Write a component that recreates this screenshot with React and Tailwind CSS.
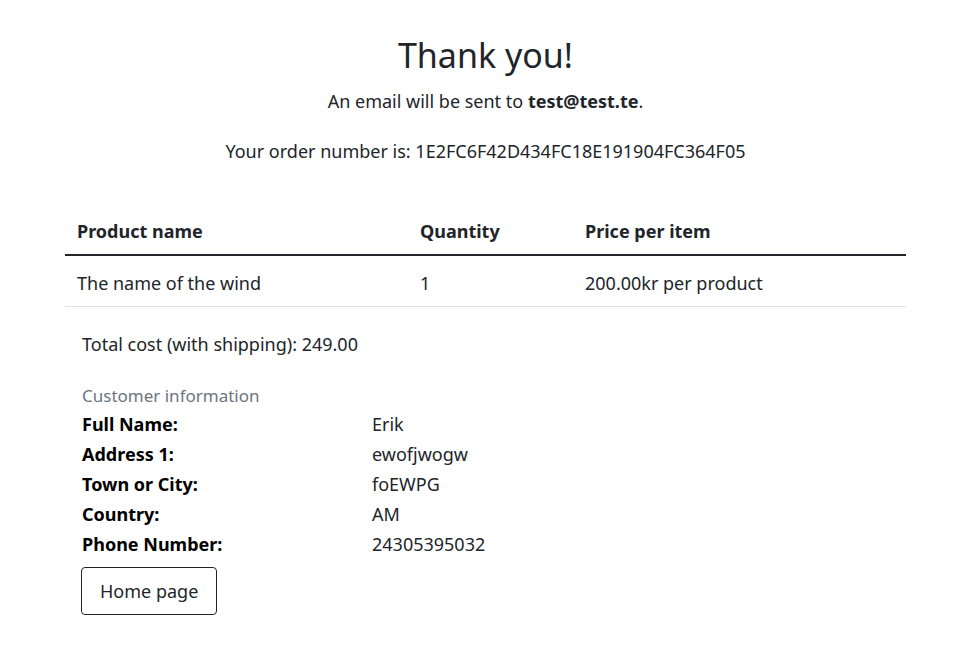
import React from "react";

const order = {
  email: "test@test.te",
  number: "1E2FC6F42D434FC18E191904FC364F05",
  items: [{ name: "The name of the wind", quantity: 1, price: "200.00" }],
  total: "249.00",
};

const customer = [
  ["Full Name:", "Erik"],
  ["Address 1:", "ewofjwogw"],
  ["Town or City:", "foEWPG"],
  ["Country:", "AM"],
  ["Phone Number:", "24305395032"],
];

export default function App() {
  return (
    <div
      className="min-h-[648px] bg-white text-[#212529] text-[18px]"
      style={{ fontFamily: '"Noto Sans", "Open Sans", sans-serif' }}
    >
      <div className="ml-[65px] w-[841px] pt-[31px]">
        <div className="text-center">
          <h1 className="text-[34px] leading-[48px]">Thank you!</h1>
          <p className="mt-[9px] leading-[27px]">
            An email will be sent to <strong className="font-bold">{order.email}</strong>.
          </p>
          <p className="mt-[23px] leading-[27px]">Your order number is: {order.number}</p>
        </div>

        <table className="mt-[43px] w-full text-left">
          <thead>
            <tr className="border-b-2 border-[#212529]">
              <th className="w-[343px] px-3 pt-[10px] pb-[9px] font-bold">Product name</th>
              <th className="w-[165px] px-3 pt-[10px] pb-[9px] font-bold">Quantity</th>
              <th className="px-3 pt-[10px] pb-[9px] font-bold">Price per item</th>
            </tr>
          </thead>
          <tbody>
            {order.items.map((item) => (
              <tr key={item.name} className="border-b border-[#dee2e6]">
                <td className="px-3 pt-[14px] pb-[9px]">{item.name}</td>
                <td className="px-3 pt-[14px] pb-[9px]">{item.quantity}</td>
                <td className="px-3 pt-[14px] pb-[9px]">{item.price}kr per product</td>
              </tr>
            ))}
          </tbody>
        </table>

        <div className="px-[17px]">
          <p className="mt-[24px] leading-[27px]">Total cost (with shipping): {order.total}</p>

          <p className="mt-[25px] text-[17px] leading-[26px] text-[#6c757d]">Customer information</p>
          <div className="text-black">
            {customer.map(([label, value]) => (
              <div key={label} className="flex leading-[30px]">
                <span className="w-[290px] font-bold">{label}</span>
                <span className="text-[#212529]">{value}</span>
              </div>
            ))}
          </div>

          <button className="-ml-px mt-[8px] rounded-[4px] border border-[#212529] px-[18px] py-[10px] text-[18px] leading-[26px] text-[#212529]">
            Home page
          </button>
        </div>
      </div>
    </div>
  );
}
